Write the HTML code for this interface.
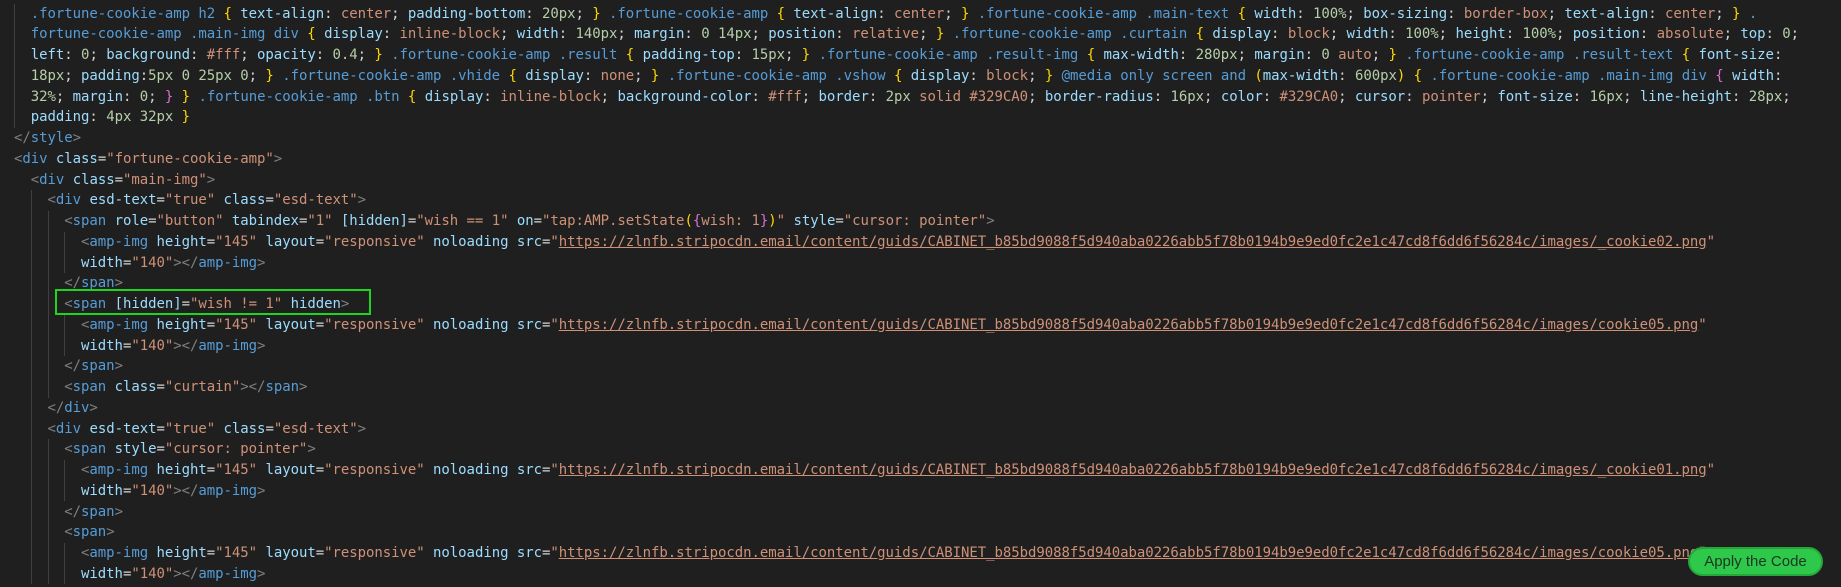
<!DOCTYPE html>
<html><head><meta charset="utf-8"><style>
body{margin:0;width:1841px;height:587px;background:#1f1f1f;overflow:hidden;position:relative;font-family:"DejaVu Sans Mono","Liberation Mono",monospace;}
#c{position:absolute;left:14px;top:3.6px}
#c div{height:20.75px;line-height:20.75px;font-size:14px;letter-spacing:-0.05px;white-space:pre;color:#d4d4d4}
.g{position:absolute;width:1px;background:#404040}
.t{color:#569cd6}.p{color:#808080}.a{color:#9cdcfe}.s{color:#ce9178}.u{color:#ce9178;text-decoration:underline}
.y{color:#ffd700}.m{color:#da70d6}.sel{color:#569cd6}.k{color:#9cdcfe}.v{color:#ce9178}.n{color:#b5cea8}
.box{position:absolute;left:55px;top:289px;width:312px;height:22px;border:2px solid #1fd41f}
.btn{position:absolute;left:1688px;top:547px;width:135px;height:29px;background:#2ec84a;border:2px solid #24a83c;border-radius:16px;box-sizing:border-box;font-family:"Liberation Sans",sans-serif;font-size:15px;color:#1d3524;text-align:center;line-height:26px}
</style></head><body>
<div class="g" style="left:14px;top:3.6px;height:124px"></div>
<div class="g" style="left:31px;top:190px;height:394px"></div>
<div class="g" style="left:48px;top:211px;height:187px"></div>
<div class="g" style="left:48px;top:439px;height:145px"></div>
<div class="g" style="left:64px;top:232px;height:41px"></div>
<div class="g" style="left:64px;top:315px;height:41px"></div>
<div class="g" style="left:64px;top:460px;height:41px"></div>
<div class="g" style="left:64px;top:543px;height:41px"></div>
<div id="c">
<div>  <span class="sel">.fortune-cookie-amp h2</span> <span class="y">{</span> <span class="k">text-align</span>: <span class="v">center</span>; <span class="k">padding-bottom</span>: <span class="n">20px</span>; <span class="y">}</span> <span class="sel">.fortune-cookie-amp</span> <span class="y">{</span> <span class="k">text-align</span>: <span class="v">center</span>; <span class="y">}</span> <span class="sel">.fortune-cookie-amp .main-text</span> <span class="y">{</span> <span class="k">width</span>: <span class="n">100%</span>; <span class="k">box-sizing</span>: <span class="v">border-box</span>; <span class="k">text-align</span>: <span class="v">center</span>; <span class="y">}</span> <span class="sel">.</span></div>
<div>  <span class="sel">fortune-cookie-amp .main-img div</span> <span class="y">{</span> <span class="k">display</span>: <span class="v">inline-block</span>; <span class="k">width</span>: <span class="n">140px</span>; <span class="k">margin</span>: <span class="n">0 14px</span>; <span class="k">position</span>: <span class="v">relative</span>; <span class="y">}</span> <span class="sel">.fortune-cookie-amp .curtain</span> <span class="y">{</span> <span class="k">display</span>: <span class="v">block</span>; <span class="k">width</span>: <span class="n">100%</span>; <span class="k">height</span>: <span class="n">100%</span>; <span class="k">position</span>: <span class="v">absolute</span>; <span class="k">top</span>: <span class="n">0</span>;</div>
<div>  <span class="k">left</span>: <span class="n">0</span>; <span class="k">background</span>: <span class="v">#fff</span>; <span class="k">opacity</span>: <span class="n">0.4</span>; <span class="y">}</span> <span class="sel">.fortune-cookie-amp .result</span> <span class="y">{</span> <span class="k">padding-top</span>: <span class="n">15px</span>; <span class="y">}</span> <span class="sel">.fortune-cookie-amp .result-img</span> <span class="y">{</span> <span class="k">max-width</span>: <span class="n">280px</span>; <span class="k">margin</span>: <span class="n">0</span> <span class="v">auto</span>; <span class="y">}</span> <span class="sel">.fortune-cookie-amp .result-text</span> <span class="y">{</span> <span class="k">font-size</span>:</div>
<div>  <span class="n">18px</span>; <span class="k">padding</span>:<span class="n">5px 0 25px 0</span>; <span class="y">}</span> <span class="sel">.fortune-cookie-amp .vhide</span> <span class="y">{</span> <span class="k">display</span>: <span class="v">none</span>; <span class="y">}</span> <span class="sel">.fortune-cookie-amp .vshow</span> <span class="y">{</span> <span class="k">display</span>: <span class="v">block</span>; <span class="y">}</span> <span class="t">@media</span> <span class="t">only screen and</span> <span class="y">(</span><span class="k">max-width</span>: <span class="n">600px</span><span class="y">)</span> <span class="y">{</span> <span class="sel">.fortune-cookie-amp .main-img div</span> <span class="m">{</span> <span class="k">width</span>:</div>
<div>  <span class="n">32%</span>; <span class="k">margin</span>: <span class="n">0</span>; <span class="m">}</span> <span class="y">}</span> <span class="sel">.fortune-cookie-amp .btn</span> <span class="y">{</span> <span class="k">display</span>: <span class="v">inline-block</span>; <span class="k">background-color</span>: <span class="v">#fff</span>; <span class="k">border</span>: <span class="n">2px</span> <span class="v">solid #329CA0</span>; <span class="k">border-radius</span>: <span class="n">16px</span>; <span class="k">color</span>: <span class="v">#329CA0</span>; <span class="k">cursor</span>: <span class="v">pointer</span>; <span class="k">font-size</span>: <span class="n">16px</span>; <span class="k">line-height</span>: <span class="n">28px</span>;</div>
<div>  <span class="k">padding</span>: <span class="n">4px 32px</span> <span class="y">}</span></div>
<div><span class="p">&lt;/</span><span class="t">style</span><span class="p">&gt;</span></div>
<div><span class="p">&lt;</span><span class="t">div</span> <span class="a">class</span>=<span class="s">"fortune-cookie-amp"</span><span class="p">&gt;</span></div>
<div>  <span class="p">&lt;</span><span class="t">div</span> <span class="a">class</span>=<span class="s">"main-img"</span><span class="p">&gt;</span></div>
<div>    <span class="p">&lt;</span><span class="t">div</span> <span class="a">esd-text</span>=<span class="s">"true"</span> <span class="a">class</span>=<span class="s">"esd-text"</span><span class="p">&gt;</span></div>
<div>      <span class="p">&lt;</span><span class="t">span</span> <span class="a">role</span>=<span class="s">"button"</span> <span class="a">tabindex</span>=<span class="s">"1"</span> <span class="a">[hidden]</span>=<span class="s">"wish == 1"</span> <span class="a">on</span>=<span class="s">"tap:AMP.setState<span class="y">(</span><span class="m">{</span>wish: 1<span class="m">}</span><span class="y">)</span>"</span> <span class="a">style</span>=<span class="s">"cursor: pointer"</span><span class="p">&gt;</span></div>
<div>        <span class="p">&lt;</span><span class="t">amp-img</span> <span class="a">height</span>=<span class="s">"145"</span> <span class="a">layout</span>=<span class="s">"responsive"</span> <span class="a">noloading</span> <span class="a">src</span>=<span class="s">"</span><span class="u">https://zlnfb.stripocdn.email/content/guids/CABINET_b85bd9088f5d940aba0226abb5f78b0194b9e9ed0fc2e1c47cd8f6dd6f56284c/images/_cookie02.png</span><span class="s">"</span></div>
<div>        <span class="a">width</span>=<span class="s">"140"</span><span class="p">&gt;&lt;/</span><span class="t">amp-img</span><span class="p">&gt;</span></div>
<div>      <span class="p">&lt;/</span><span class="t">span</span><span class="p">&gt;</span></div>
<div>      <span class="p">&lt;</span><span class="t">span</span> <span class="a">[hidden]</span>=<span class="s">"wish != 1"</span> <span class="a">hidden</span><span class="p">&gt;</span></div>
<div>        <span class="p">&lt;</span><span class="t">amp-img</span> <span class="a">height</span>=<span class="s">"145"</span> <span class="a">layout</span>=<span class="s">"responsive"</span> <span class="a">noloading</span> <span class="a">src</span>=<span class="s">"</span><span class="u">https://zlnfb.stripocdn.email/content/guids/CABINET_b85bd9088f5d940aba0226abb5f78b0194b9e9ed0fc2e1c47cd8f6dd6f56284c/images/cookie05.png</span><span class="s">"</span></div>
<div>        <span class="a">width</span>=<span class="s">"140"</span><span class="p">&gt;&lt;/</span><span class="t">amp-img</span><span class="p">&gt;</span></div>
<div>      <span class="p">&lt;/</span><span class="t">span</span><span class="p">&gt;</span></div>
<div>      <span class="p">&lt;</span><span class="t">span</span> <span class="a">class</span>=<span class="s">"curtain"</span><span class="p">&gt;&lt;/</span><span class="t">span</span><span class="p">&gt;</span></div>
<div>    <span class="p">&lt;/</span><span class="t">div</span><span class="p">&gt;</span></div>
<div>    <span class="p">&lt;</span><span class="t">div</span> <span class="a">esd-text</span>=<span class="s">"true"</span> <span class="a">class</span>=<span class="s">"esd-text"</span><span class="p">&gt;</span></div>
<div>      <span class="p">&lt;</span><span class="t">span</span> <span class="a">style</span>=<span class="s">"cursor: pointer"</span><span class="p">&gt;</span></div>
<div>        <span class="p">&lt;</span><span class="t">amp-img</span> <span class="a">height</span>=<span class="s">"145"</span> <span class="a">layout</span>=<span class="s">"responsive"</span> <span class="a">noloading</span> <span class="a">src</span>=<span class="s">"</span><span class="u">https://zlnfb.stripocdn.email/content/guids/CABINET_b85bd9088f5d940aba0226abb5f78b0194b9e9ed0fc2e1c47cd8f6dd6f56284c/images/_cookie01.png</span><span class="s">"</span></div>
<div>        <span class="a">width</span>=<span class="s">"140"</span><span class="p">&gt;&lt;/</span><span class="t">amp-img</span><span class="p">&gt;</span></div>
<div>      <span class="p">&lt;/</span><span class="t">span</span><span class="p">&gt;</span></div>
<div>      <span class="p">&lt;</span><span class="t">span</span><span class="p">&gt;</span></div>
<div>        <span class="p">&lt;</span><span class="t">amp-img</span> <span class="a">height</span>=<span class="s">"145"</span> <span class="a">layout</span>=<span class="s">"responsive"</span> <span class="a">noloading</span> <span class="a">src</span>=<span class="s">"</span><span class="u">https://zlnfb.stripocdn.email/content/guids/CABINET_b85bd9088f5d940aba0226abb5f78b0194b9e9ed0fc2e1c47cd8f6dd6f56284c/images/cookie05.png</span><span class="s">"</span></div>
<div>        <span class="a">width</span>=<span class="s">"140"</span><span class="p">&gt;&lt;/</span><span class="t">amp-img</span><span class="p">&gt;</span></div>
</div>
<div class="box"></div>
<div class="btn">Apply the Code</div>
</body></html>
